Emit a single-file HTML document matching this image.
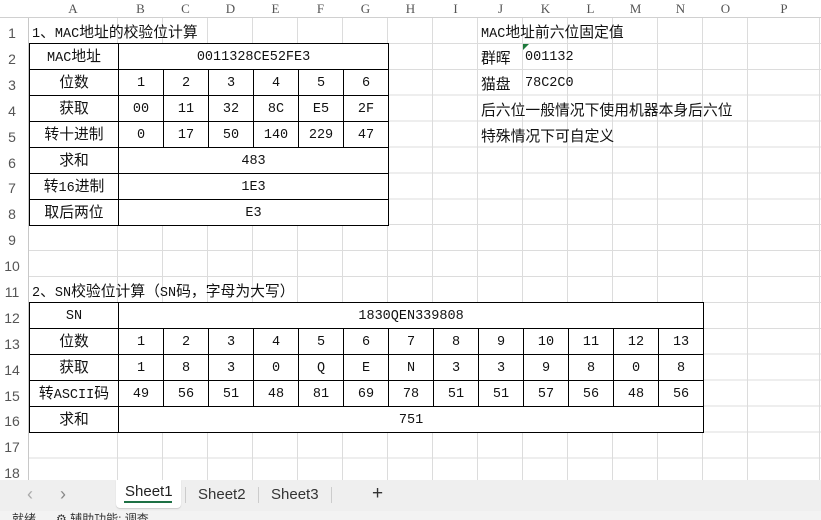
<!DOCTYPE html>
<html><head><meta charset="utf-8"><style>
*{margin:0;padding:0;box-sizing:border-box}
body{width:821px;height:520px;overflow:hidden;background:#fff;position:relative;font-family:"Liberation Mono","Noto Sans CJK SC",monospace;font-size:13.5px;color:#111}
b{font-weight:normal;font-family:"Noto Sans CJK SC",sans-serif;font-size:14.8px}
.abs{position:absolute}
#grid{left:29px;top:18px;width:792px;height:462px;
background-image:repeating-linear-gradient(to bottom,transparent 0,transparent 24.9px,#dcdcdc 24.9px,#dcdcdc 25.9px),
linear-gradient(to right,transparent 88px,#dcdcdc 88px,#dcdcdc 89px,transparent 89px);}
.vl{position:absolute;top:0;width:1px;height:462px;background:#dcdcdc}
#colh{left:0;top:0;width:821px;height:18px;background:#fff;border-bottom:1px solid #d0d0d0}
#colh span{position:absolute;top:1px;text-align:center;font-family:"Liberation Serif",serif;font-size:13px;color:#555}
#rowh{left:0;top:18px;width:29px;height:462px;border-right:1px solid #c8c8c8}
#rowh span{position:absolute;left:0;width:24px;text-align:center;font-family:"Liberation Sans",sans-serif;font-size:14px;color:#555;line-height:26px}
table{position:absolute;border-collapse:collapse;table-layout:fixed;background:#fff}
td{border:1px solid #000;text-align:center;height:25.9px;padding:0;white-space:nowrap;overflow:hidden;line-height:20px;vertical-align:middle;padding-top:2px}
.t{position:absolute;white-space:nowrap;line-height:26px}
#tabs{left:0;top:480px;width:821px;height:31px;background:#efefef;font-family:"Liberation Sans",sans-serif;font-size:15px;color:#333}
#tabs .t{line-height:20px}
#status{left:0;top:511px;width:821px;height:9px;background:#f3f3f3;overflow:hidden;font-family:"Liberation Sans","Noto Sans CJK SC",sans-serif;font-size:12px;color:#333}
</style></head><body>
<div id="grid" class="abs">
<div class="vl" style="left:133px"></div><div class="vl" style="left:178px"></div><div class="vl" style="left:223px"></div><div class="vl" style="left:268px"></div><div class="vl" style="left:313px"></div><div class="vl" style="left:358px"></div><div class="vl" style="left:403px"></div><div class="vl" style="left:448px"></div><div class="vl" style="left:493px"></div><div class="vl" style="left:538px"></div><div class="vl" style="left:583px"></div><div class="vl" style="left:628px"></div><div class="vl" style="left:673px"></div><div class="vl" style="left:718px"></div><div class="vl" style="left:790px"></div>
</div>
<div id="colh" class="abs">
<span style="left:29px;width:88px">A</span><span style="left:118px;width:45px">B</span><span style="left:163px;width:45px">C</span><span style="left:208px;width:45px">D</span><span style="left:253px;width:45px">E</span><span style="left:298px;width:45px">F</span><span style="left:343px;width:45px">G</span><span style="left:388px;width:45px">H</span><span style="left:433px;width:45px">I</span><span style="left:478px;width:45px">J</span><span style="left:523px;width:45px">K</span><span style="left:568px;width:45px">L</span><span style="left:613px;width:45px">M</span><span style="left:658px;width:45px">N</span><span style="left:703px;width:45px">O</span><span style="left:748px;width:72px">P</span>
</div>
<div id="rowh" class="abs">
<span style="top:2px">1</span><span style="top:28px">2</span><span style="top:54px">3</span><span style="top:80px">4</span><span style="top:106px">5</span><span style="top:132px">6</span><span style="top:157px">7</span><span style="top:183px">8</span><span style="top:209px">9</span><span style="top:235px">10</span><span style="top:261px">11</span><span style="top:287px">12</span><span style="top:313px">13</span><span style="top:339px">14</span><span style="top:365px">15</span><span style="top:390px">16</span><span style="top:416px">17</span><span style="top:442px">18</span>
</div>

<div class="t" style="left:32px;top:19px">1<b>、</b>MAC<b>地址的校验位计算</b></div>
<table style="left:29px;top:43.4px;width:359px">
<colgroup><col style="width:89px"><col style="width:45px"><col style="width:45px"><col style="width:45px"><col style="width:45px"><col style="width:45px"><col style="width:45px"></colgroup>
<tr><td>MAC<b>地址</b></td><td colspan="6">0011328CE52FE3</td></tr>
<tr><td><b>位数</b></td><td>1</td><td>2</td><td>3</td><td>4</td><td>5</td><td>6</td></tr>
<tr><td><b>获取</b></td><td>00</td><td>11</td><td>32</td><td>8C</td><td>E5</td><td>2F</td></tr>
<tr><td><b>转十进制</b></td><td>0</td><td>17</td><td>50</td><td>140</td><td>229</td><td>47</td></tr>
<tr><td><b>求和</b></td><td colspan="6">483</td></tr>
<tr><td><b>转</b>16<b>进制</b></td><td colspan="6">1E3</td></tr>
<tr><td><b>取后两位</b></td><td colspan="6">E3</td></tr>
</table>

<div class="t" style="left:481px;top:19px">MAC<b>地址前六位固定值</b></div>
<div class="t" style="left:481px;top:45px"><b>群晖</b></div><div class="t" style="left:525px;top:45px">001132</div>
<div class="abs" style="left:523px;top:44px;width:0;height:0;border-top:6px solid #1e7a3c;border-right:6px solid transparent"></div>
<div class="t" style="left:481px;top:71px"><b>猫盘</b></div><div class="t" style="left:525px;top:71px">78C2C0</div>
<div class="t" style="left:481px;top:97px"><b>后六位一般情况下使用机器本身后六位</b></div>
<div class="t" style="left:481px;top:123px"><b>特殊情况下可自定义</b></div>

<div class="t" style="left:32px;top:278px">2<b>、</b>SN<b>校验位计算（</b>SN<b>码，字母为大写）</b></div>
<table style="left:29px;top:302.3px;width:674px">
<colgroup><col style="width:89px"><col span="13" style="width:45px"></colgroup>
<tr><td>SN</td><td colspan="13">1830QEN339808</td></tr>
<tr><td><b>位数</b></td><td>1</td><td>2</td><td>3</td><td>4</td><td>5</td><td>6</td><td>7</td><td>8</td><td>9</td><td>10</td><td>11</td><td>12</td><td>13</td></tr>
<tr><td><b>获取</b></td><td>1</td><td>8</td><td>3</td><td>0</td><td>Q</td><td>E</td><td>N</td><td>3</td><td>3</td><td>9</td><td>8</td><td>0</td><td>8</td></tr>
<tr><td><b>转</b>ASCII<b>码</b></td><td>49</td><td>56</td><td>51</td><td>48</td><td>81</td><td>69</td><td>78</td><td>51</td><td>51</td><td>57</td><td>56</td><td>48</td><td>56</td></tr>
<tr><td><b>求和</b></td><td colspan="13">751</td></tr>
</table>

<div id="tabs" class="abs">
<span class="t" style="left:27px;top:4px;color:#aaa;font-size:18px">&#8249;</span>
<span class="t" style="left:60px;top:4px;color:#888;font-size:18px">&#8250;</span>
<div class="abs" style="left:116px;top:0;width:65px;height:28px;background:#fff;border-radius:0 0 4px 4px;box-shadow:0 1px 1px #ccc"></div>
<span class="t" style="left:125px;top:2px;color:#222">Sheet1</span>
<div class="abs" style="left:124px;top:21px;width:48px;height:2px;background:#1e7145"></div>
<div class="abs" style="left:185px;top:7px;width:1px;height:16px;background:#ccc"></div>
<span class="t" style="left:198px;top:5px">Sheet2</span>
<div class="abs" style="left:258px;top:7px;width:1px;height:16px;background:#ccc"></div>
<span class="t" style="left:271px;top:5px">Sheet3</span>
<div class="abs" style="left:331px;top:7px;width:1px;height:16px;background:#ccc"></div>
<span class="t" style="left:372px;top:4px;font-size:19px">+</span>
</div>
<div id="status" class="abs"><span class="t" style="left:12px;top:0px;line-height:16px">就绪</span><span class="t" style="left:56px;top:0px;line-height:16px">⚙ 辅助功能: 调查</span></div>
</body></html>
